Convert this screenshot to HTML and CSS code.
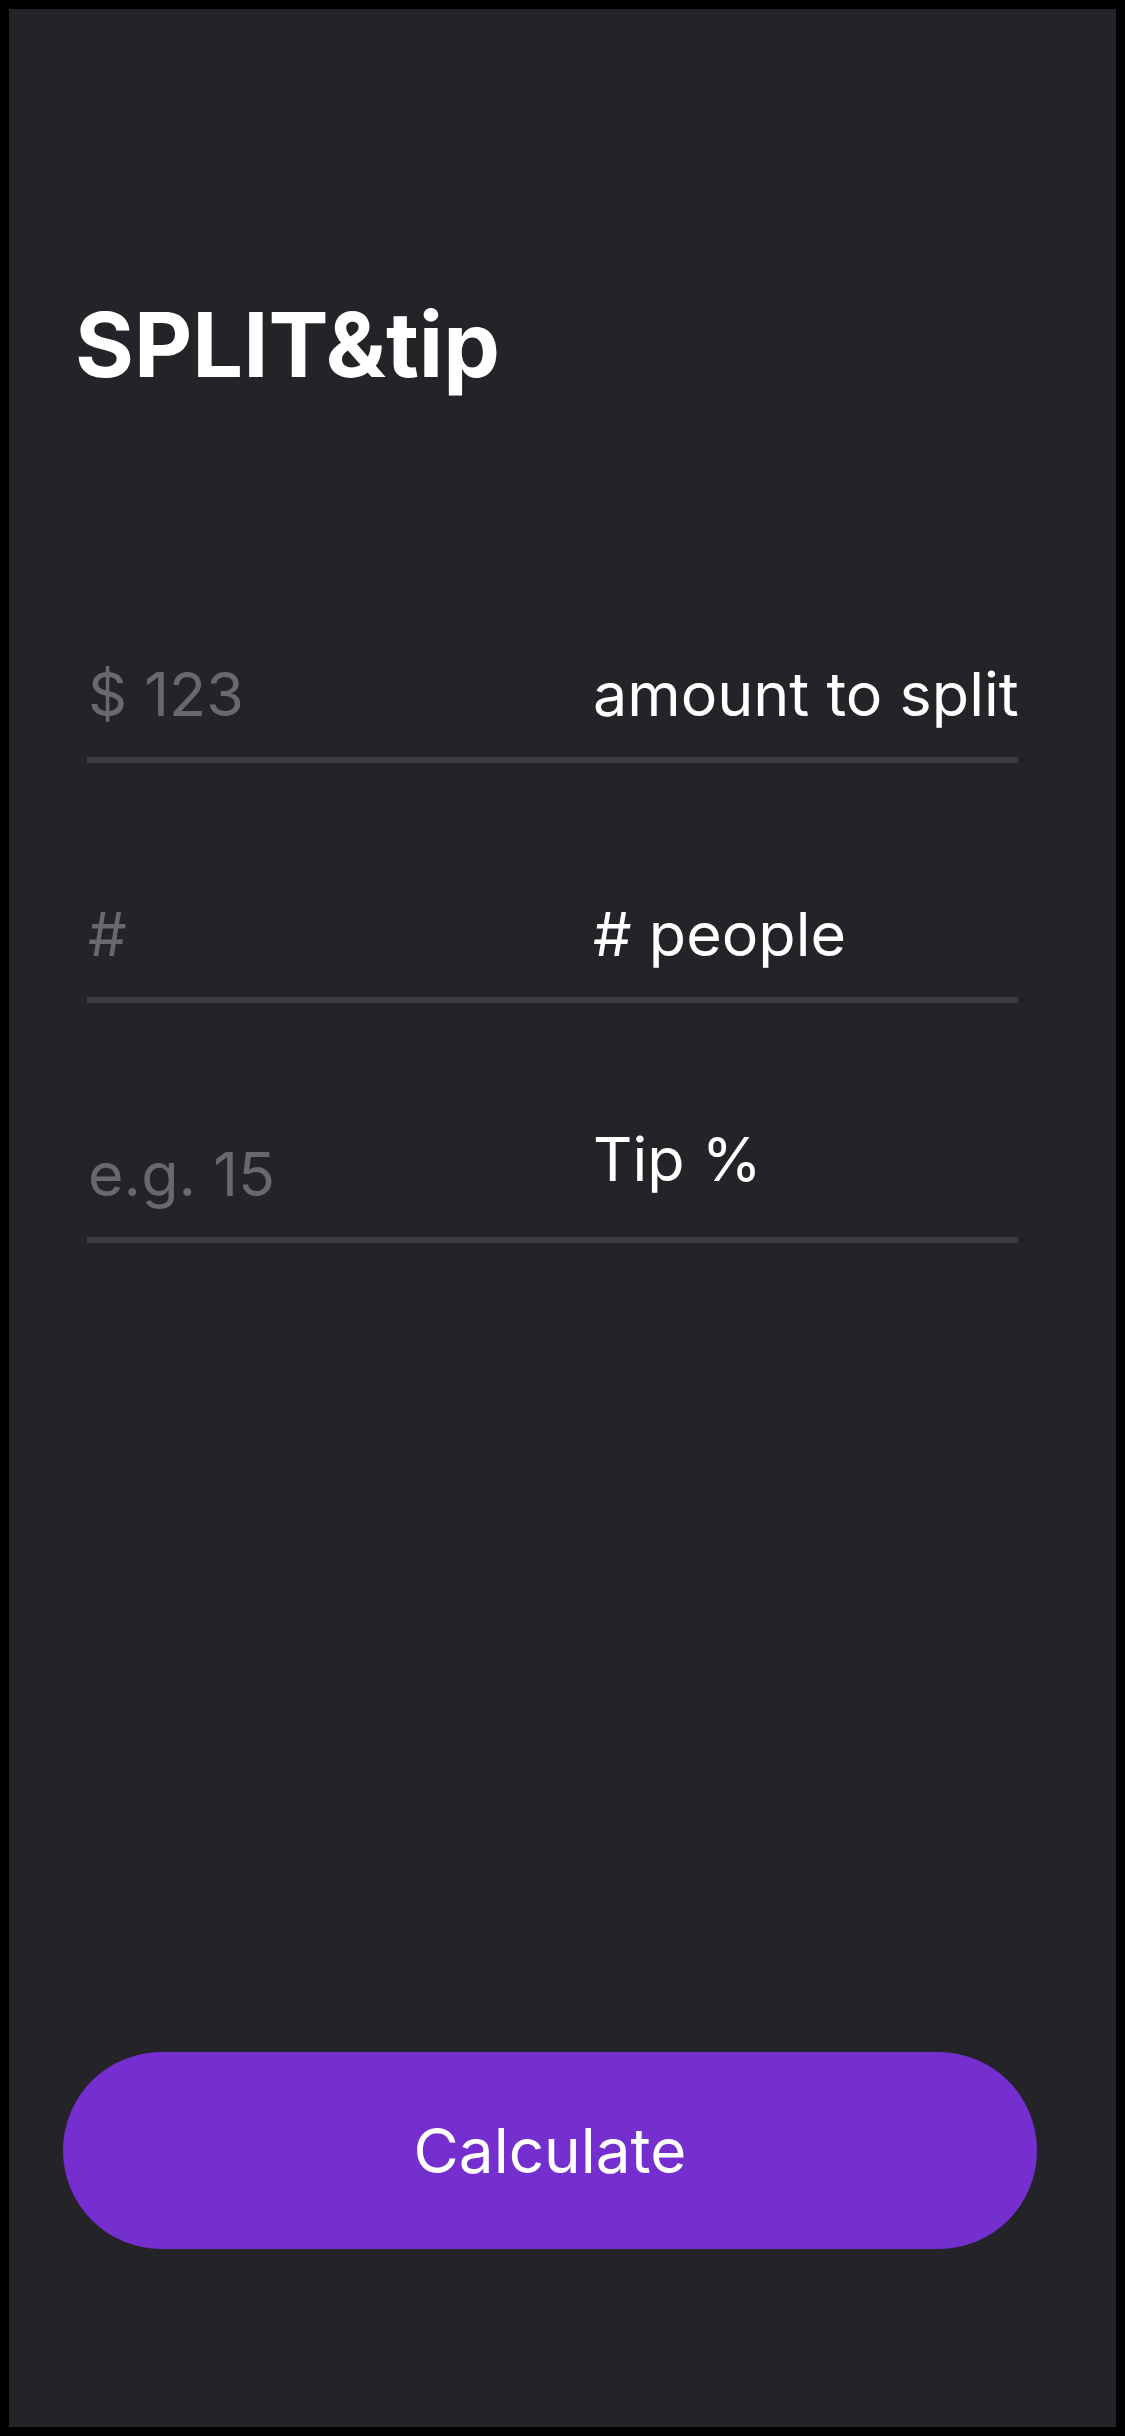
FILE: index.html
```html
<!DOCTYPE html>
<html lang="en">
<head>
  <meta charset="UTF-8" />
  <title>SPLIT&amp;tip</title>
  <link rel="stylesheet" href="styles.css">
</head>
<body>

<main id="screen">
  <h1 class="title">SPLIT&amp;tip</h1>

  <form id="splitForm" onsubmit="event.preventDefault();">
    <div class="field">
      <input type="number" id="amount" placeholder="$ 123" />
      <label for="amount">amount to split</label>
    </div>

    <div class="field">
      <input type="number" id="people" placeholder="#" />
      <label for="people"># people</label>
    </div>

    <div class="field field-tip">
      <input type="number" id="tip" placeholder="e.g. 15" />
      <label for="tip">Tip %</label>
    </div>
  </form>

  <button id="calcBtn" type="button">Calculate</button>
</main>

</body>
</html>
```

FILE: styles.css
```css
html, body {
  height: 100%;
  margin: 0;
  background: #000;
  font-family: Inter, "Noto Sans", sans-serif;
}

body {
  padding: 9px;
  box-sizing: border-box;
}

#screen {
  height: 100%;
  background: #242328;
  display: flex;
  flex-direction: column;
  padding-top: 291px;
  box-sizing: border-box;
}

.title {
  margin: 0 0 0 66px;
  font-size: 90px;
  line-height: 1;
  font-weight: 700;
  color: #fff;
}

form {
  display: flex;
  flex-direction: column;
  gap: 134px;
  margin: 267px 98px 0 78px;
}

.field {
  display: flex;
  align-items: flex-end;
  padding-bottom: 26px;
  border-bottom: 6px solid #3c3b43;
}

input {
  width: 506px;
  flex: none;
  padding: 0 0 0 1px;
  border: none;
  outline: none;
  background: transparent;
  color: #fff;
  font-family: inherit;
  font-size: 61px;
  line-height: normal;
  height: 74px;
  box-sizing: border-box;
}

input::placeholder {
  color: #69686d;
}

label {
  flex: 1;
  color: #fff;
  font-size: 61px;
  line-height: normal;
  white-space: nowrap;
}

/* label sits a little higher than the placeholder on this row */
.field-tip label {
  margin-top: -15px;
  padding-bottom: 15px;
}

#calcBtn {
  margin: auto 79px 178px 54px;
  height: 197px;
  border: none;
  border-radius: 99px;
  background: #752fcf;
  color: #fff;
  font-family: inherit;
  font-size: 62px;
  cursor: pointer;
}
```
